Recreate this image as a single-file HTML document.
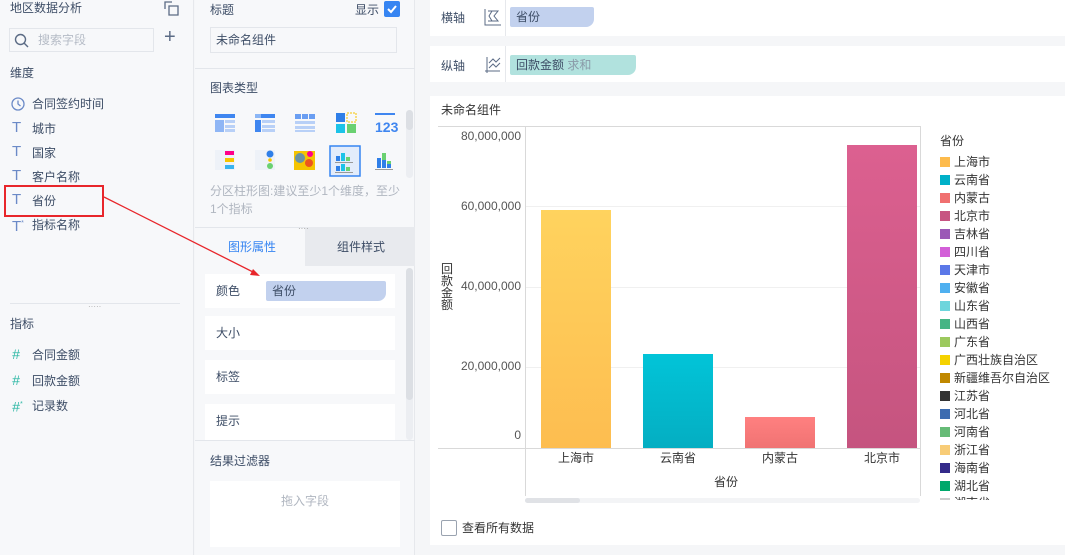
<!DOCTYPE html>
<html><head><meta charset="utf-8"><style>
*{box-sizing:border-box;margin:0;padding:0}
body{width:1065px;height:555px;overflow:hidden;background:#f5f6f8;font-family:"Liberation Sans","Noto Sans CJK SC",sans-serif;font-size:12px;color:#333;position:relative}
.a{position:absolute}
.t{position:absolute;white-space:nowrap;line-height:14px}
.it{color:#3d4d66}
.ic{color:#6b8ac7;font-size:15px}
.hash{color:#2fb8a6;font-size:14px;font-style:italic}
.card{position:absolute;background:#fff}
.leg{position:absolute;left:940px;font-size:12px;line-height:14px;color:#333}
.leg i{display:inline-block;width:10px;height:10px;margin-right:4px;vertical-align:-1px}
</style></head><body>
<!-- left panel -->
<div class="a" style="left:0;top:0;width:194px;height:555px;background:#f7f8fa;border-right:1px solid #e6e8ec"></div>
<div class="t it" style="left:10px;top:1px">地区数据分析</div>
<svg class="a" style="left:164px;top:1px" width="15" height="15" viewBox="0 0 15 15" fill="none" stroke="#5b6b85" stroke-width="1.3"><path d="M1 8V1h7M5 5h9v9H5z"/></svg>
<div class="a" style="left:9px;top:28px;width:145px;height:24px;border:1px solid #e3e6eb;background:#f7f8fa"></div>
<svg class="a" style="left:14px;top:33px" width="15" height="15" fill="none" stroke="#5b6b85" stroke-width="1.4"><circle cx="6.5" cy="6.5" r="5"/><path d="M10 10l4 4"/></svg>
<div class="t" style="left:38px;top:33px;color:#b5bbc6">搜索字段</div>
<div class="t" style="left:164px;top:30px;font-size:20px;color:#5b6b85">+</div>
<div class="t it" style="left:10px;top:66px">维度</div>
<svg class="a" style="left:11px;top:97px" width="14" height="14" fill="none" stroke="#6b8ac7" stroke-width="1.3"><circle cx="7" cy="7" r="6"/><path d="M7 3.5V7l2.5 2"/></svg>
<div class="t it" style="left:32px;top:97px">合同签约时间</div>
<div class="t ic" style="left:12px;top:121px">T</div><div class="t it" style="left:32px;top:122px">城市</div>
<div class="t ic" style="left:12px;top:145px">T</div><div class="t it" style="left:32px;top:146px">国家</div>
<div class="t ic" style="left:12px;top:169px">T</div><div class="t it" style="left:32px;top:170px">客户名称</div>
<div class="t ic" style="left:12px;top:193px">T</div><div class="t it" style="left:32px;top:194px">省份</div>
<div class="t ic" style="left:12px;top:217px">T<sup style="font-size:7px">*</sup></div><div class="t it" style="left:32px;top:218px">指标名称</div>
<div class="a" style="left:4px;top:185px;width:100px;height:32px;border:2px solid #e8262b"></div>
<div class="a" style="left:10px;top:303px;width:170px;height:1px;background:#e3e6eb"></div>
<div class="t" style="left:88px;top:305px;color:#aaa;font-size:8px;line-height:4px">·····</div>
<div class="t it" style="left:10px;top:317px">指标</div>
<div class="t hash" style="left:12px;top:347px">#</div><div class="t it" style="left:32px;top:348px">合同金额</div>
<div class="t hash" style="left:12px;top:373px">#</div><div class="t it" style="left:32px;top:374px">回款金额</div>
<div class="t hash" style="left:12px;top:398px">#<sup style="font-size:7px">*</sup></div><div class="t it" style="left:32px;top:399px">记录数</div>

<!-- middle panel -->
<div class="a" style="left:195px;top:0;width:220px;height:555px;background:#f7f8fa;border-right:1px solid #e6e8ec"></div>
<div class="t it" style="left:210px;top:3px">标题</div>
<div class="t it" style="left:355px;top:3px">显示</div>
<div class="a" style="left:384px;top:1px;width:16px;height:16px;background:#3685f2;border-radius:2px"></div>
<svg class="a" style="left:384px;top:1px" width="16" height="16" fill="none" stroke="#fff" stroke-width="2"><path d="M4 8l3 3 5-6"/></svg>
<div class="a" style="left:210px;top:27px;width:187px;height:26px;border:1px solid #e3e6eb;background:#f7f8fa"></div>
<div class="t it" style="left:216px;top:33px">未命名组件</div>
<div class="a" style="left:195px;top:68px;width:220px;height:1px;background:#e3e6eb"></div>
<div class="t it" style="left:210px;top:81px">图表类型</div>
<svg class="a" style="left:205px;top:108px" width="200" height="70">
<g fill="#3f86f0"><rect x="10" y="6" width="20" height="4"/><rect x="10" y="12" width="9" height="12" fill="#8fb6f5"/><rect x="20" y="12" width="10" height="3" fill="#b8d0f7"/><rect x="20" y="17" width="10" height="3" fill="#b8d0f7"/><rect x="20" y="21" width="10" height="3" fill="#b8d0f7"/></g>
<g><rect x="50" y="6" width="20" height="4" fill="#3f86f0"/><rect x="50" y="6" width="6" height="4" fill="#fff" opacity=".4"/><rect x="50" y="12" width="6" height="12" fill="#3f86f0"/><rect x="57" y="12" width="13" height="3" fill="#b8d0f7"/><rect x="57" y="17" width="13" height="3" fill="#b8d0f7"/><rect x="57" y="21" width="13" height="3" fill="#b8d0f7"/></g>
<g fill="#6a9ef2"><rect x="90" y="6" width="6" height="5"/><rect x="97" y="6" width="6" height="5"/><rect x="104" y="6" width="6" height="5"/><rect x="90" y="13" width="20" height="3" fill="#b8d0f7"/><rect x="90" y="18" width="20" height="3" fill="#b8d0f7"/><rect x="90" y="22" width="20" height="2" fill="#b8d0f7"/></g>
<g><rect x="131" y="5" width="9" height="9" fill="#2f7fe8"/><rect x="142" y="5" width="9" height="9" fill="none" stroke="#f5c400" stroke-dasharray="2 1"/><rect x="131" y="16" width="9" height="9" fill="#1cc3e8"/><rect x="142" y="16" width="9" height="9" fill="#6ad171"/></g>
<rect x="170" y="5" width="20" height="2" fill="#3f86f0"/><text x="170" y="24" font-size="14" fill="#3f86f0" font-family="Liberation Sans Narrow,Liberation Sans" font-weight="bold">123</text>
<g><rect x="10" y="42" width="20" height="20" fill="#eef2f8"/><rect x="20" y="43" width="9" height="4" fill="#f08"/><rect x="20" y="50" width="9" height="4" fill="#f5c400"/><rect x="20" y="57" width="9" height="4" fill="#38b4f0"/></g>
<g><rect x="50" y="42" width="20" height="20" fill="#eef2f8"/><circle cx="65" cy="46" r="3.5" fill="#2f7fe8"/><circle cx="65" cy="52" r="1.8" fill="#f5c400"/><circle cx="65" cy="58" r="3" fill="#6ad171"/></g>
<g><rect x="89" y="43" width="21" height="19" fill="#f5c400"/><circle cx="95" cy="50" r="5" fill="#2f7fe8" opacity=".7"/><circle cx="104" cy="55" r="4" fill="#e8262b" opacity=".7"/><circle cx="105" cy="46" r="3" fill="#f08"/></g>
<rect x="125" y="38" width="30" height="30" fill="#e3ecfb" stroke="#3685f2" stroke-width="1.5"/>
<g fill="#2f7fe8"><rect x="131" y="48" width="4" height="5"/><rect x="136" y="45" width="4" height="8" fill="#1cc3e8"/><rect x="141" y="49" width="4" height="4" fill="#6ad171"/><rect x="131" y="58" width="4" height="5"/><rect x="136" y="56" width="4" height="7" fill="#1cc3e8"/><rect x="141" y="59" width="4" height="4" fill="#6ad171"/><rect x="130" y="54" width="18" height="1" fill="#999"/><rect x="130" y="64" width="18" height="1" fill="#999"/></g>
<g><rect x="172" y="50" width="4" height="10" fill="#2f7fe8"/><rect x="177" y="45" width="4" height="15" fill="#6ad171"/><rect x="177" y="52" width="4" height="8" fill="#2f7fe8"/><rect x="182" y="53" width="4" height="7" fill="#6ad171"/><rect x="182" y="56" width="4" height="4" fill="#2f7fe8"/><rect x="170" y="61" width="18" height="1" fill="#999"/></g>
</svg>
<div class="a" style="left:406px;top:110px;width:7px;height:68px;background:#eceef2;border-radius:4px"></div>
<div class="a" style="left:406px;top:110px;width:7px;height:20px;background:#dcdfe4;border-radius:4px"></div>
<div class="t" style="left:210px;top:182px;color:#b0b6c0;line-height:18px;white-space:normal;width:195px">分区柱形图:建议至少1个维度，至少1个指标</div>
<div class="a" style="left:195px;top:227px;width:110px;height:39px;background:#f7f8fa;border-top:1px solid #e3e6eb"></div>
<div class="a" style="left:305px;top:227px;width:110px;height:39px;background:#e8eaee"></div>
<div class="t" style="left:228px;top:240px;color:#3685f2">图形属性</div>
<div class="t it" style="left:337px;top:240px">组件样式</div>
<div class="t" style="left:298px;top:227px;color:#999;font-size:8px;line-height:4px">····</div>
<div class="card" style="left:205px;top:274px;width:190px;height:34px"></div>
<div class="t it" style="left:216px;top:284px">颜色</div>
<div class="a" style="left:266px;top:281px;width:120px;height:20px;background:#c2d1ee;border-radius:2px 2px 8px 2px"></div>
<div class="t it" style="left:272px;top:284px">省份</div>
<div class="card" style="left:205px;top:316px;width:190px;height:34px"></div><div class="t it" style="left:216px;top:326px">大小</div>
<div class="card" style="left:205px;top:360px;width:190px;height:34px"></div><div class="t it" style="left:216px;top:370px">标签</div>
<div class="card" style="left:205px;top:404px;width:190px;height:36px"></div><div class="t it" style="left:216px;top:414px">提示</div>
<div class="a" style="left:406px;top:268px;width:7px;height:172px;background:#eceef2;border-radius:4px"></div>
<div class="a" style="left:406px;top:268px;width:7px;height:132px;background:#dcdfe4;border-radius:4px"></div>
<div class="a" style="left:195px;top:440px;width:220px;height:1px;background:#e3e6eb"></div>
<div class="t it" style="left:210px;top:454px">结果过滤器</div>
<div class="card" style="left:210px;top:481px;width:190px;height:66px"></div>
<div class="t" style="left:281px;top:494px;color:#b0b6c0">拖入字段</div>

<!-- arrow -->
<svg class="a" style="left:0;top:0" width="300" height="300"><line x1="104" y1="197" x2="255" y2="273" stroke="#e8262b" stroke-width="1.3"/><path d="M260 276l-10-1 3-6z" fill="#e8262b"/></svg>

<!-- right -->
<div class="card" style="left:430px;top:0;width:635px;height:36px"></div>
<div class="t it" style="left:441px;top:11px">横轴</div>
<svg class="a" style="left:484px;top:8px" width="36" height="20" fill="none" stroke="#5b6b85" stroke-width="1"><path d="M1 1v16h16M4 3h10l-4 5 4 5H4M8 3l-3 5 3 5"/><path d="M26 16l6 0-3 3z" fill="#3d4d66" stroke="none"/></svg>
<div class="a" style="left:505px;top:0;width:1px;height:36px;background:#e6e8ec"></div>
<div class="a" style="left:510px;top:7px;width:84px;height:20px;background:#c2d1ee;border-radius:2px 2px 8px 2px"></div>
<div class="t it" style="left:516px;top:10px">省份</div>
<div class="card" style="left:430px;top:46px;width:635px;height:36px"></div>
<div class="t it" style="left:441px;top:59px">纵轴</div>
<svg class="a" style="left:484px;top:56px" width="36" height="20" fill="none" stroke="#5b6b85" stroke-width="1"><path d="M3 1v16M1 15h15M5 7l4-4 3 3 4-4M5 12l4-4 3 3 4-4"/><path d="M26 16l6 0-3 3z" fill="#3d4d66" stroke="none"/></svg>
<div class="a" style="left:505px;top:46px;width:1px;height:36px;background:#e6e8ec"></div>
<div class="a" style="left:510px;top:55px;width:126px;height:20px;background:#b1e2de;border-radius:2px 2px 8px 2px"></div>
<div class="t it" style="left:516px;top:58px">回款金额 <span style="color:#8a9aa8">求和</span></div>

<div class="card" style="left:430px;top:96px;width:635px;height:449px"></div>
<div class="t" style="left:441px;top:103px">未命名组件</div>
<div class="a" style="left:438px;top:126px;width:482px;height:1px;background:#d9d9d9"></div>
<div class="a" style="left:920px;top:126px;width:1px;height:370px;background:#d9d9d9"></div>
<div class="a" style="left:525px;top:126px;width:1px;height:370px;background:#d9d9d9"></div>
<div class="a" style="left:438px;top:448px;width:482px;height:1px;background:#d9d9d9"></div>
<div class="a" style="left:526px;top:206px;width:394px;height:1px;background:#f0f0f0"></div>
<div class="a" style="left:526px;top:287px;width:394px;height:1px;background:#f0f0f0"></div>
<div class="a" style="left:526px;top:367px;width:394px;height:1px;background:#f0f0f0"></div>
<div class="t" style="left:440px;top:129px;width:81px;text-align:right;color:#555">80,000,000</div>
<div class="t" style="left:440px;top:199px;width:81px;text-align:right;color:#555">60,000,000</div>
<div class="t" style="left:440px;top:279px;width:81px;text-align:right;color:#555">40,000,000</div>
<div class="t" style="left:440px;top:359px;width:81px;text-align:right;color:#555">20,000,000</div>
<div class="t" style="left:440px;top:428px;width:81px;text-align:right;color:#555">0</div>
<div class="t" style="left:441px;top:263px;width:14px;white-space:normal;line-height:12px;color:#333">回款金额</div>
<div class="a" style="left:541px;top:210px;width:70px;height:238px;background:linear-gradient(#ffd35e,#fdbd50)"></div>
<div class="a" style="left:643px;top:354px;width:70px;height:94px;background:linear-gradient(#02c4d8,#04aec2)"></div>
<div class="a" style="left:745px;top:417px;width:70px;height:31px;background:linear-gradient(#ff8080,#f07373)"></div>
<div class="a" style="left:847px;top:145px;width:70px;height:303px;background:linear-gradient(#dc6090,#c5547f)"></div>
<div class="t" style="left:558px;top:451px">上海市</div>
<div class="t" style="left:660px;top:451px">云南省</div>
<div class="t" style="left:762px;top:451px">内蒙古</div>
<div class="t" style="left:864px;top:451px">北京市</div>
<div class="t" style="left:714px;top:475px">省份</div>
<div class="a" style="left:525px;top:498px;width:395px;height:5px;background:#f3f4f6;border-radius:3px"></div>
<div class="a" style="left:525px;top:498px;width:55px;height:5px;background:#e0e2e6;border-radius:3px"></div>
<div class="t" style="left:940px;top:134px">省份</div>
<div class="leg" style="top:155px"><i style="background:#fdbb4d"></i>上海市</div>
<div class="leg" style="top:173px"><i style="background:#00b0c8"></i>云南省</div>
<div class="leg" style="top:191px"><i style="background:#f07070"></i>内蒙古</div>
<div class="leg" style="top:209px"><i style="background:#c75482"></i>北京市</div>
<div class="leg" style="top:227px"><i style="background:#9b59b6"></i>吉林省</div>
<div class="leg" style="top:245px"><i style="background:#d35fd8"></i>四川省</div>
<div class="leg" style="top:263px"><i style="background:#5b78e8"></i>天津市</div>
<div class="leg" style="top:281px"><i style="background:#4fb0f0"></i>安徽省</div>
<div class="leg" style="top:299px"><i style="background:#6dd5dc"></i>山东省</div>
<div class="leg" style="top:317px"><i style="background:#46b585"></i>山西省</div>
<div class="leg" style="top:335px"><i style="background:#9cc95e"></i>广东省</div>
<div class="leg" style="top:353px"><i style="background:#f5d200"></i>广西壮族自治区</div>
<div class="leg" style="top:371px"><i style="background:#c08800"></i>新疆维吾尔自治区</div>
<div class="leg" style="top:389px"><i style="background:#333"></i>江苏省</div>
<div class="leg" style="top:407px"><i style="background:#3d6cb0"></i>河北省</div>
<div class="leg" style="top:425px"><i style="background:#66bb77"></i>河南省</div>
<div class="leg" style="top:443px"><i style="background:#f8cc77"></i>浙江省</div>
<div class="leg" style="top:461px"><i style="background:#342a8a"></i>海南省</div>
<div class="leg" style="top:479px"><i style="background:#00a86b"></i>湖北省</div>
<div class="a" style="left:935px;top:496px;width:120px;height:4px;overflow:hidden"><div class="leg" style="left:5px;top:0"><i style="background:#ccc"></i>湖南省</div></div>
<div class="a" style="left:441px;top:520px;width:16px;height:16px;border:1px solid #9aa3b0;border-radius:2px"></div>
<div class="t" style="left:462px;top:521px">查看所有数据</div>
</body></html>
